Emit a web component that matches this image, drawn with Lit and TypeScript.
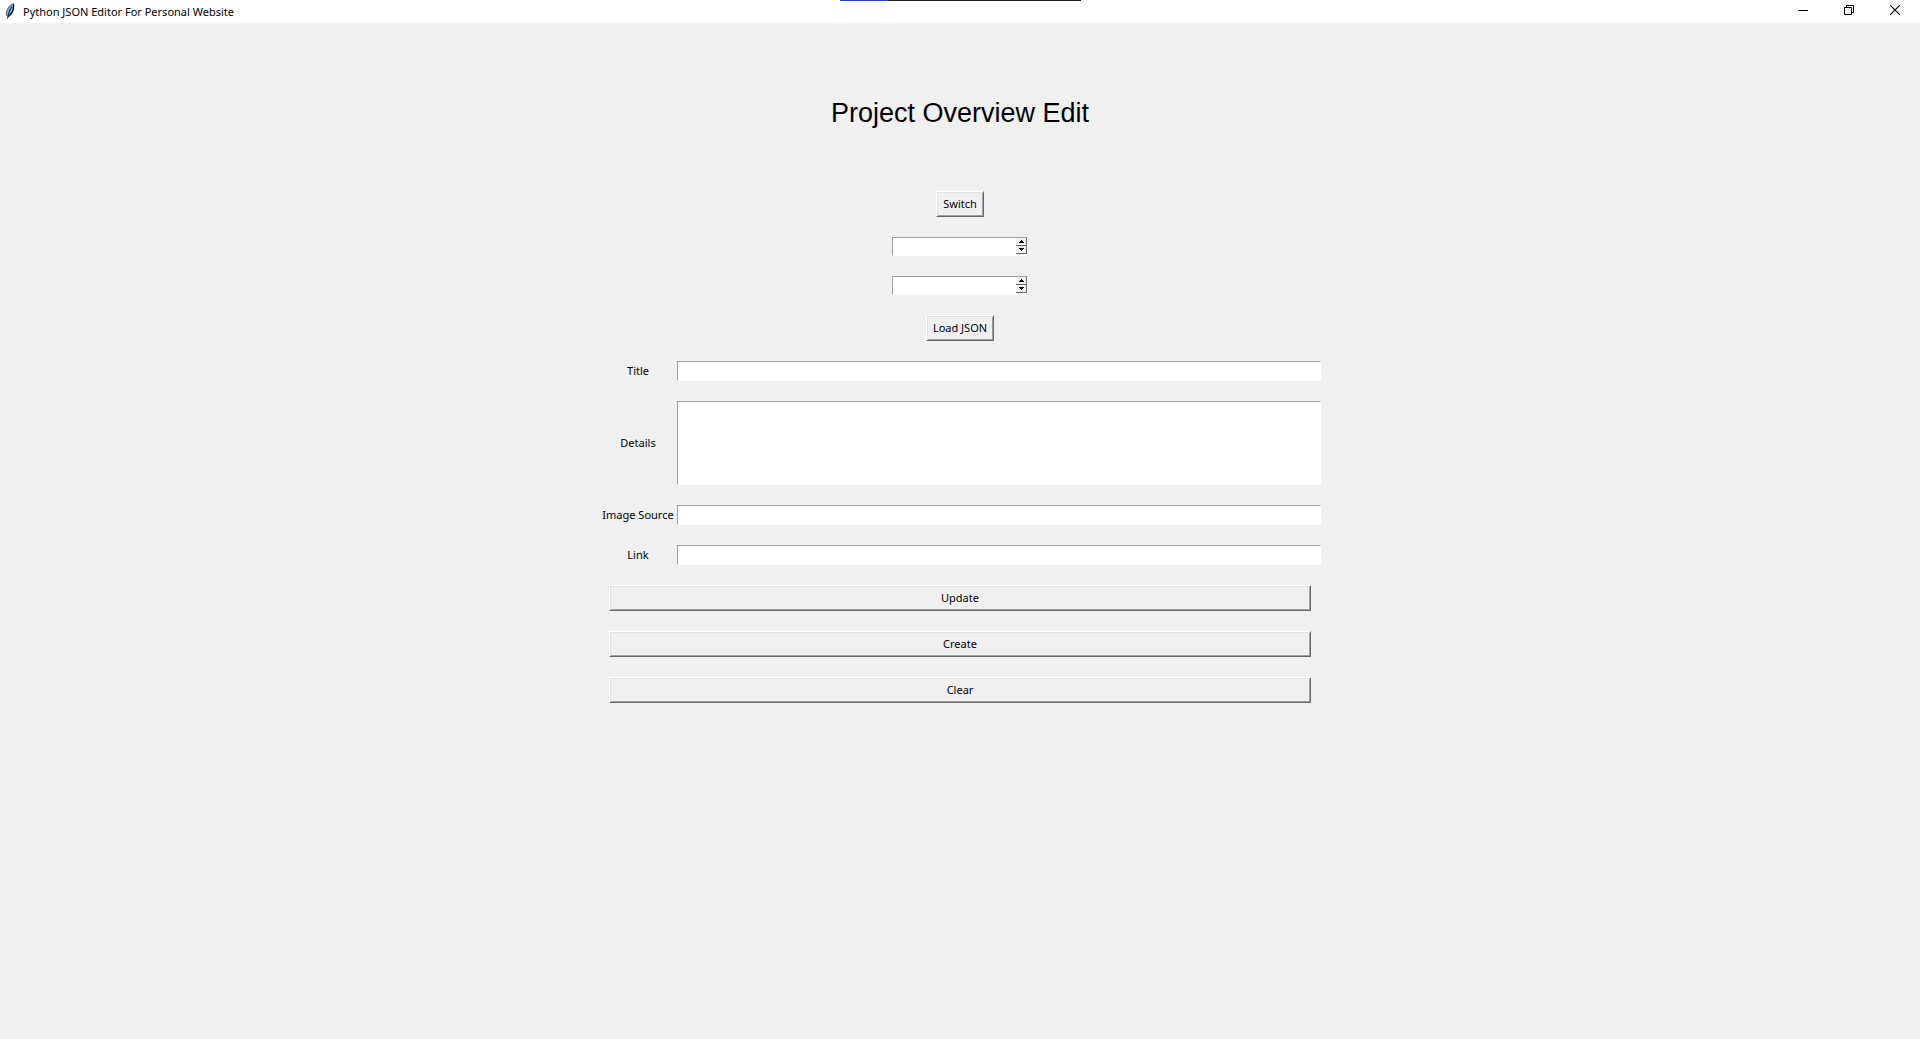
import { LitElement, html, css } from "lit";
import { customElement, property, state } from "lit/decorators.js";

@customElement("window-bar")
class WindowBar extends LitElement {
  @property() caption = "";

  static styles = css`
    :host { display: block; background: #fff; }
    .bar { position: relative; display: flex; align-items: center; height: 23px; padding: 0 2px; }
    .progress { position: absolute; top: 0; left: 840px; width: 241px; height: 1px; display: flex; background: #1f1f1f; }
    .done { width: 20%; background: #2541c4; }
    .logo { width: 16px; height: 18px; }
    h2 { margin: 0 auto 0 5px; font: 400 11px/16px "Noto Sans", "Open Sans", sans-serif; color: #000; }
    button { width: 46px; height: 23px; padding: 0 0 3px; border: 0; background: none; display: grid; place-items: center; }
    button:hover { background: #e5e5e5; }
    svg { display: block; }
  `;

  render() {
    return html`
      <header class="bar">
        <div class="progress"><div class="done"></div></div>
        <svg class="logo" viewBox="0 0 16 18">
          <path d="M11.400 .8C8.500 1.800 5.600 4.600 4.600 8L4.200 12L5.500 13.600C8 12.400 10.200 9.500 11 6.500Z" fill="#6aa5e6"/>
          <path d="M11.400 .8C8.500 1.800 5.600 4.600 4.600 8L4.200 12L5.500 13.600" fill="none" stroke="#4a5c72" stroke-width=".8"/>
          <path d="M11.600 .8L11.400 6C10.600 9.500 8.500 12 6.200 13.600" fill="none" stroke="#10131a" stroke-width="1.300"/>
          <path d="M10 3.500C8 6.500 6.400 10 5.600 15.800" fill="none" stroke="#1b2430" stroke-width="1"/>
        </svg>
        <h2>${this.caption}</h2>
        <button aria-label="Minimize"><svg width="10" height="10"><path d="M0 5.500H10" stroke="#000"/></svg></button>
        <button aria-label="Restore"><svg width="10" height="10" fill="none" stroke="#000"><path d="M.5 2.500H7.500V9.500H.5ZM2.500 2.500V.5H9.500V7.500H7.500"/></svg></button>
        <button aria-label="Close"><svg width="10" height="10"><path d="M0 0L10 10M10 0L0 10" stroke="#000" stroke-width="1.100"/></svg></button>
      </header>
    `;
  }
}

@customElement("spin-box")
class SpinBox extends LitElement {
  @property() label = "";
  @state() private value = "";

  static styles = css`
    .box { display: flex; width: 136px; height: 19px; box-sizing: border-box; border: 1px solid #fff; border-top-color: #a0a0a0; border-left-color: #a0a0a0; background: #fff; }
    input { flex: 1; min-width: 0; padding: 0 2px; border: 0; outline: 0; background: none; font: 11px "Noto Sans", sans-serif; }
    .arrows { display: flex; flex-direction: column; width: 11px; }
    button { height: 8px; box-sizing: border-box; padding: 0; border: 0 solid #696969; border-width: 0 1px 1px 0; background: #f0f0f0; display: grid; place-items: center; }
    svg { display: block; }
  `;

  private step(by: number) {
    this.value = String((Number(this.value) || 0) + by);
  }

  render() {
    return html`
      <div class="box">
        <input aria-label=${this.label} .value=${this.value} @input=${(e: Event) => (this.value = (e.target as HTMLInputElement).value)} />
        <div class="arrows">
          <button aria-label="Increase" @click=${() => this.step(1)}><svg width="5" height="3" shape-rendering="crispEdges"><path d="M2 0H3V1H4V2H5V3H0V2H1V1H2Z"/></svg></button>
          <button aria-label="Decrease" @click=${() => this.step(-1)}><svg width="5" height="3" shape-rendering="crispEdges"><path d="M0 0H5V1H4V2H3V3H2V2H1V1H0Z"/></svg></button>
        </div>
      </div>
    `;
  }
}

@customElement("app-root")
class AppRoot extends LitElement {
  static styles = css`
    :host { display: flex; flex-direction: column; min-height: 100vh; background: #f0f0f0; color: #000; font: 11px/16px "Noto Sans", "Open Sans", sans-serif; }
    main { display: flex; flex-direction: column; align-items: center; gap: 20px; padding: 75px 20px 20px; }
    h1 { margin: 0 0 43px; font: 400 27px/30px "Liberation Sans", Arial, sans-serif; }
    button { height: 26px; padding: 0 6px; border: 1px solid; border-color: #fff #696969 #696969 #fff; box-shadow: inset 1px 1px #e3e3e3, inset -1px -1px #a0a0a0; background: #f0f0f0; font: inherit; color: inherit; }
    .wide { width: 100%; max-width: 702px; }
    form { display: flex; flex-direction: column; align-items: center; gap: 20px; width: 100%; max-width: 722px; }
    .row { display: grid; grid-template-columns: 78px 1fr; align-items: center; width: 100%; }
    label { text-align: center; white-space: nowrap; }
    input, textarea { display: block; box-sizing: border-box; width: 100%; height: 20px; margin: 0; padding: 1px 2px; border: 1px solid #fff; border-top-color: #a0a0a0; border-left-color: #a0a0a0; border-radius: 0; outline: 0; background: #fff; font: inherit; resize: none; }
    textarea { height: 84px; }
  `;

  private clear() {
    this.renderRoot.querySelector("form")?.reset();
  }

  private row(id: string, label: string, multiline = false) {
    return html`
      <div class="row">
        <label for=${id}>${label}</label>
        ${multiline ? html`<textarea id=${id}></textarea>` : html`<input id=${id} type="text" />`}
      </div>
    `;
  }

  render() {
    return html`
      <window-bar caption="Python JSON Editor For Personal Website"></window-bar>
      <main>
        <h1>Project Overview Edit</h1>
        <button type="button">Switch</button>
        <spin-box label="Section"></spin-box>
        <spin-box label="Entry"></spin-box>
        <button type="button">Load JSON</button>
        <form @submit=${(e: Event) => e.preventDefault()}>
          ${this.row("title", "Title")}
          ${this.row("details", "Details", true)}
          ${this.row("image", "Image Source")}
          ${this.row("link", "Link")}
          <button class="wide" type="submit">Update</button>
          <button class="wide" type="button">Create</button>
          <button class="wide" type="button" @click=${this.clear}>Clear</button>
        </form>
      </main>
    `;
  }
}
